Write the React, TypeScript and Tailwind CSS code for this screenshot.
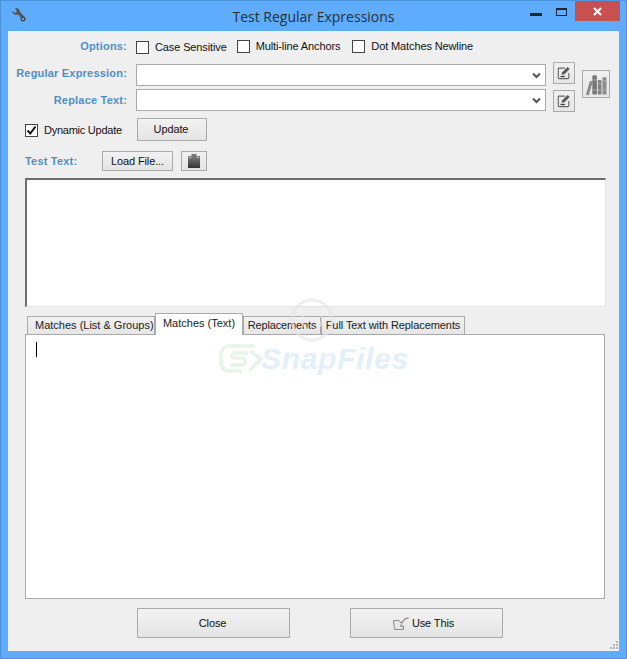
const font = { fontFamily: '"Liberation Sans", Arial, sans-serif' };

const EditIcon = () => (
  <svg width="14" height="14" viewBox="0 0 16 16">
    <path d="M9 2.500H2.500a1 1 0 0 0-1 1v10a1 1 0 0 0 1 1h10a1 1 0 0 0 1-1V8" fill="none" stroke="#666" strokeWidth="1.300" />
    <path d="M5 10l1-3 6-6 2.500 2.500-6 6z" fill="#5a5a5a" />
    <path d="M4 12h5" stroke="#3e3e3e" strokeWidth="1.500" />
  </svg>
);

const BooksIcon = () => (
  <svg width="22" height="23" viewBox="0 0 24 24">
    <path d="M1 23 5.500 8 8.500 9 4 24z" fill="#8a8a8a" />
    <rect x="8" y="2" width="5" height="21" rx="1.500" fill="#757575" />
    <rect x="14" y="7" width="4" height="16" rx="1" fill="#808080" />
    <rect x="19" y="4" width="4.500" height="19" rx="1" fill="#8c8c8c" />
    <path d="M8 7h5M8 18h5M14 11h4M14 18h4M19 8h4.500M19 18h4.500" stroke="#b0b0b0" strokeWidth="1" />
  </svg>
);

const ClipboardIcon = () => (
  <svg width="12" height="14" viewBox="0 0 12 14">
    <defs>
      <linearGradient id="clip" x1="0" y1="0" x2="0" y2="1">
        <stop offset="0" stopColor="#808080" />
        <stop offset="1" stopColor="#333" />
      </linearGradient>
    </defs>
    <rect x="0" y="2" width="12" height="12" fill="url(#clip)" />
    <rect x="3.500" y="0" width="5" height="3.500" fill="#777" />
    <path d="M1 3.500h2M9 3.500h2" stroke="#ccc" strokeWidth="1" />
  </svg>
);

const Chevron = () => (
  <svg width="9" height="7" viewBox="0 0 9 7" className="shrink-0">
    <path d="M1 1.500 4.500 5 8 1.500" fill="none" stroke="#555" strokeWidth="2" />
  </svg>
);

const Check = ({ label, checked, className }: { label: string; checked?: boolean; className?: string }) => (
  <label className={`flex items-center gap-[6px] text-[11px] tracking-[-0.12px] text-[#111] ${className ?? ''}`}>
    <span className="flex h-[13px] w-[13px] items-center justify-center border border-[#444] bg-white">
      {checked && (
        <svg width="11" height="11" viewBox="0 0 11 11">
          <path d="M1.500 5.500 4.300 8.500 9.500 1.500" fill="none" stroke="#111" strokeWidth="2" />
        </svg>
      )}
    </span>
    {label}
  </label>
);

const Combo = () => (
  <div className="flex h-[22px] w-[410px] items-center justify-end border border-[#aaa] bg-white pr-[4px]">
    <Chevron />
  </div>
);

const IconButton = ({ className, children }: { className: string; children: React.ReactNode }) => (
  <button className={`flex items-center justify-center border border-[#aaa] bg-gradient-to-b from-[#f0f0f0] to-[#e6e6e6] ${className}`}>
    {children}
  </button>
);

const TextButton = ({ className, children }: { className: string; children: React.ReactNode }) => (
  <button className={`flex items-center justify-center border border-[#aaa] bg-gradient-to-b from-[#f2f2f2] to-[#e4e4e4] text-[11px] tracking-[-0.12px] text-[#111] ${className}`}>
    {children}
  </button>
);

const Label = ({ children, className }: { children: string; className?: string }) => (
  <span className={`w-[119px] shrink-0 text-right text-[11px] font-bold tracking-[0.2px] text-[#4f8fc6] ${className ?? ''}`}>{children}</span>
);

const Tab = ({ children, className }: { children: string; className: string }) => (
  <div className={`flex h-[18px] items-center border border-b-0 border-[#aaa] bg-gradient-to-b from-[#f0f0f0] to-[#e6e6e6] text-[11px] text-[#222] ${className}`}>
    {children}
  </div>
);

export default function App() {
  return (
    <div style={font} className="flex h-[659px] w-[627px] flex-col border border-[#4c93da] bg-[#5eacfb]">
      {/* title bar */}
      <div className="grid h-[30px] shrink-0 grid-cols-[1fr_auto_1fr] items-start">
        <div className="mt-[6px] ml-[10px]">
          <svg width="16" height="16" viewBox="0 0 16 16">
            <path d="M1 4 4 6 6 4.500 4 1.500C7 .5 9 2 9 5L14 10.500 12 13 7 7.500C4 8.500 1.500 7 1 4Z" fill="#555" />
            <circle cx="12" cy="12" r="2.500" fill="#4a4a4a" />
            <circle cx="12" cy="12" r="1" fill="#8fc0f0" />
          </svg>
        </div>
        <div className="pt-[6px] text-center text-[14px] leading-[20px] text-[#25313d]" style={{ fontFamily: '"Open Sans", sans-serif' }}>
          Test Regular Expressions
        </div>
        <div className="flex items-start justify-end">
          <div className="mt-[12px] mr-[14px] h-[3px] w-[12px] bg-[#1c2733]" />
          <div className="mt-[7px] mr-[8px] h-[8px] w-[11px] border border-t-2 border-[#1c2733]" />
          <div className="flex h-[20px] w-[45px] items-center justify-center bg-[#c75050]">
            <svg width="9" height="9" viewBox="0 0 9 9">
              <path d="M1 1 8 8M8 1 1 8" stroke="#fff" strokeWidth="2" />
            </svg>
          </div>
          <div className="w-[6px]" />
        </div>
      </div>

      {/* client area */}
      <div className="relative mx-[7px] flex h-[620px] w-[611px] flex-col bg-[#efefef]">
        <div className="mb-[2px] flex h-[31px] items-center">
          <Label>Options:</Label>
          <Check label="Case Sensitive" className="mt-[1px] ml-[9px]" />
          <Check label="Multi-line Anchors" className="ml-[10px]" />
          <Check label="Dot Matches Newline" className="ml-[12px]" />
        </div>

        <div className="flex">
          <div className="flex flex-col gap-[3px]">
            <div className="flex items-center">
              <Label className="pb-[4px]">Regular Expression:</Label>
              <div className="ml-[9px]"><Combo /></div>
            </div>
            <div className="flex items-center">
              <Label>Replace Text:</Label>
              <div className="ml-[9px]"><Combo /></div>
            </div>
          </div>
          <div className="-mt-[2px] -mb-[1px] ml-[7px] flex flex-col gap-[6px]">
            <IconButton className="h-[22px] w-[22px]"><EditIcon /></IconButton>
            <IconButton className="h-[22px] w-[22px]"><EditIcon /></IconButton>
          </div>
          <IconButton className="mt-[6px] ml-[7px] h-[28px] w-[28px]"><BooksIcon /></IconButton>
        </div>

        <div className="mt-[7px] flex h-[23px] items-center pl-[17px]">
          <Check label="Dynamic Update" checked className="mt-[2px] w-[112px] tracking-[-0.25px]" />
          <TextButton className="h-[23px] w-[70px] pr-[2px]">Update</TextButton>
        </div>

        <div className="mt-[10px] flex h-[20px] items-center pl-[17px]">
          <span className="w-[77px] pt-[1px] text-[11px] font-bold tracking-[0.2px] text-[#4f8fc6]">Test Text:</span>
          <TextButton className="h-[20px] w-[71px]">Load File...</TextButton>
          <IconButton className="ml-[8px] h-[20px] w-[26px]"><ClipboardIcon /></IconButton>
        </div>

        <div className="mt-[7px] ml-[17px] h-[129px] w-[581px] border-t-2 border-r border-b border-l-2 border-t-[#6d6d6d] border-r-[#e3e3e3] border-b-[#e3e3e3] border-l-[#6d6d6d] bg-white" />

        <div className="mt-[6px] ml-[19px] flex h-[21px] items-end">
          <Tab className="w-[128px] pl-[7px]">Matches (List &amp; Groups)</Tab>
          <div className="relative z-10 -mb-px flex h-[22px] w-[88px] items-center justify-center border border-b-0 border-[#aaa] bg-white pb-[3px] text-[11px] text-[#222]">
            Matches (Text)
          </div>
          <Tab className="w-[78px] justify-center tracking-[-0.15px]">Replacements</Tab>
          <Tab className="w-[144px] justify-center tracking-[-0.08px]">Full Text with Replacements</Tab>
        </div>

        <div className="relative ml-[17px] h-[265px] w-[580px] border border-[#aaa] bg-white">
          <div className="mt-[7px] ml-[10px] h-[15px] w-px bg-black" />
          {/* watermark */}
          <svg width="44" height="44" viewBox="0 0 44 44" className="absolute top-[-37px] left-[264px] opacity-60">
            <circle cx="22" cy="22" r="20" fill="none" stroke="#e6e6e6" strokeWidth="3" />
            <circle cx="22" cy="22" r="10" fill="none" stroke="#ebebeb" strokeWidth="2" />
          </svg>
          <svg width="46" height="32" viewBox="0 0 46 32" className="absolute top-[7px] left-[192px]">
            <path d="M36 4H12C6 4 3 8 3 14V20C3 26 6 29 12 29H24" fill="none" stroke="#e6f5e8" strokeWidth="3.500" />
            <path d="M30 11H17C13 11 13 16 17 16H24C28 16 28 23 24 23H12" fill="none" stroke="#e6f5e8" strokeWidth="3.500" />
            <path d="M32 9 43 17 31 29" fill="none" stroke="#e6f5e8" strokeWidth="3.500" />
          </svg>
          <span className="absolute top-[7px] left-[235px] text-[30px] leading-[34px] font-bold tracking-[0.7px] text-[#e3f0fa] italic">SnapFiles</span>
        </div>

        <div className="mt-[9px] flex pl-[129px]">
          <TextButton className="h-[30px] w-[153px] pr-[2px]">Close</TextButton>
          <TextButton className="ml-[60px] h-[30px] w-[153px] gap-[3px] pr-[6px]">
            <svg width="16" height="13" viewBox="0 0 16 13">
              <path d="M.5 3.500H6L8 6 12 1.500 15.500 1C11 2 9 5 7.500 9.500L10.500 9V12.500H1.500Z" fill="#e6e6e6" stroke="#8a8a8a" />
            </svg>
            Use This
          </TextButton>
        </div>

        {/* resize grip */}
        <svg width="9" height="9" viewBox="0 0 9 9" className="absolute right-[1px] bottom-[1px]">
          <path d="M7 0h2v2H7zM4 3h2v2H4zM7 3h2v2H7zM1 6h2v2H1zM4 6h2v2H4zM7 6h2v2H7z" fill="#b5b5b5" />
        </svg>
      </div>
    </div>
  );
}
